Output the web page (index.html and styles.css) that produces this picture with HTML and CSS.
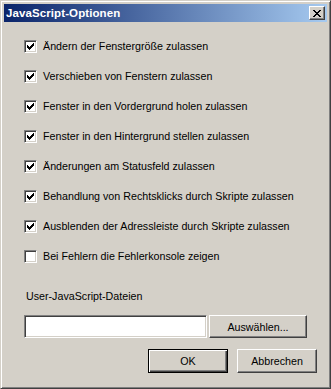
FILE: index.html
```html
<!DOCTYPE html>
<html lang="de">
  <head>
    <meta charset="UTF-8" />
    <title>JavaScript-Optionen</title>
    <link rel="stylesheet" href="styles.css">
  </head>
  <body>
    <div class="window">
      <header class="titlebar">
        <span class="title">JavaScript-Optionen</span>
        <button class="close" type="button" aria-label="Schließen">
          <svg width="8" height="7" viewBox="0 0 8 7" shape-rendering="crispEdges">
            <path d="M0 0h2v1h-2zM6 0h2v1h-2zM1 1h2v1h-2zM5 1h2v1h-2zM2 2h4v1h-4zM3 3h2v1h-2zM2 4h4v1h-4zM1 5h2v1h-2zM5 5h2v1h-2zM0 6h2v1h-2zM6 6h2v1h-2z" fill="#000"/>
          </svg>
        </button>
      </header>

      <main class="content">
        <ul class="options">
          <li class="option"><span class="box"><svg class="tick" width="11" height="11" viewBox="0 0 11 11" shape-rendering="crispEdges"><path d="M2 4h1v3h-1zM3 5h1v3h-1zM4 6h1v3h-1zM5 5h1v3h-1zM6 4h1v3h-1zM7 3h1v3h-1zM8 2h1v3h-1z" fill="#000"/></svg></span>Ändern der Fenstergröße zulassen</li>
          <li class="option"><span class="box"><svg class="tick" width="11" height="11" viewBox="0 0 11 11" shape-rendering="crispEdges"><path d="M2 4h1v3h-1zM3 5h1v3h-1zM4 6h1v3h-1zM5 5h1v3h-1zM6 4h1v3h-1zM7 3h1v3h-1zM8 2h1v3h-1z" fill="#000"/></svg></span>Verschieben von Fenstern zulassen</li>
          <li class="option"><span class="box"><svg class="tick" width="11" height="11" viewBox="0 0 11 11" shape-rendering="crispEdges"><path d="M2 4h1v3h-1zM3 5h1v3h-1zM4 6h1v3h-1zM5 5h1v3h-1zM6 4h1v3h-1zM7 3h1v3h-1zM8 2h1v3h-1z" fill="#000"/></svg></span>Fenster in den Vordergrund holen zulassen</li>
          <li class="option"><span class="box"><svg class="tick" width="11" height="11" viewBox="0 0 11 11" shape-rendering="crispEdges"><path d="M2 4h1v3h-1zM3 5h1v3h-1zM4 6h1v3h-1zM5 5h1v3h-1zM6 4h1v3h-1zM7 3h1v3h-1zM8 2h1v3h-1z" fill="#000"/></svg></span>Fenster in den Hintergrund stellen zulassen</li>
          <li class="option"><span class="box"><svg class="tick" width="11" height="11" viewBox="0 0 11 11" shape-rendering="crispEdges"><path d="M2 4h1v3h-1zM3 5h1v3h-1zM4 6h1v3h-1zM5 5h1v3h-1zM6 4h1v3h-1zM7 3h1v3h-1zM8 2h1v3h-1z" fill="#000"/></svg></span>Änderungen am Statusfeld zulassen</li>
          <li class="option"><span class="box"><svg class="tick" width="11" height="11" viewBox="0 0 11 11" shape-rendering="crispEdges"><path d="M2 4h1v3h-1zM3 5h1v3h-1zM4 6h1v3h-1zM5 5h1v3h-1zM6 4h1v3h-1zM7 3h1v3h-1zM8 2h1v3h-1z" fill="#000"/></svg></span>Behandlung von Rechtsklicks durch Skripte zulassen</li>
          <li class="option"><span class="box"><svg class="tick" width="11" height="11" viewBox="0 0 11 11" shape-rendering="crispEdges"><path d="M2 4h1v3h-1zM3 5h1v3h-1zM4 6h1v3h-1zM5 5h1v3h-1zM6 4h1v3h-1zM7 3h1v3h-1zM8 2h1v3h-1z" fill="#000"/></svg></span>Ausblenden der Adressleiste durch Skripte zulassen</li>
          <li class="option"><span class="box"></span>Bei Fehlern die Fehlerkonsole zeigen</li>
        </ul>

        <div class="files-label">User-JavaScript-Dateien</div>
        <div class="file-row">
          <div class="textfield"></div>
          <button class="btn browse" type="button">Auswählen...</button>
        </div>

        <div class="actions">
          <button class="btn default" type="button">OK</button>
          <button class="btn" type="button">Abbrechen</button>
        </div>
      </main>
    </div>
  </body>
</html>
```

FILE: styles.css
```css
html,
body {
  margin: 0;
  padding: 0;
  background: #d4d0c8;
}

body {
  font-family: "Liberation Sans", Arial, sans-serif;
  font-size: 10.7px;
  color: #000;
}

.window {
  box-sizing: border-box;
  width: 331px;
  height: 389px;
  border: 1px solid;
  border-color: #d4d0c8 #404040 #404040 #d4d0c8;
  box-shadow: inset 1px 1px #fff, inset -1px -1px #808080;
  padding: 3px;
  background: #d4d0c8;
}

/* title bar */
.titlebar {
  height: 18px;
  display: flex;
  align-items: center;
  justify-content: space-between;
  padding: 0 2px 0 2px;
  background: linear-gradient(to right, #0a246a, #a6caf0);
}

.title {
  color: #fff;
  font-weight: bold;
  font-size: 11.5px;
  letter-spacing: 0.1px;
}

.close {
  box-sizing: border-box;
  width: 16px;
  height: 14px;
  padding: 0;
  display: flex;
  align-items: center;
  justify-content: center;
  background: #d4d0c8;
  border: 1px solid;
  border-color: #fff #404040 #404040 #fff;
  box-shadow: inset -1px -1px #808080;
}

.close svg {
  display: block;
  margin: 0 1px 0 0;
}

/* body of the dialog */
.content {
  padding: 18px 10px 0 20px;
}

.options {
  list-style: none;
  margin: 0;
  padding: 0;
  display: flex;
  flex-direction: column;
  gap: 17px;
}

.option {
  display: flex;
  align-items: center;
  height: 13px;
  line-height: 13px;
  white-space: nowrap;
}

.box {
  box-sizing: border-box;
  flex: none;
  width: 13px;
  height: 13px;
  margin-right: 6px;
  background: #fff;
  border: 1px solid;
  border-color: #808080 #fff #fff #808080;
  box-shadow: inset 1px 1px #404040, inset -1px -1px #d4d0c8;
}

.tick {
  display: block;
}

.files-label {
  margin-top: 27px;
  padding-left: 2px;
  line-height: 13px;
}

.file-row {
  display: flex;
  gap: 2px;
  margin-top: 12px;
}

.textfield {
  box-sizing: border-box;
  width: 183px;
  height: 23px;
  background: #fff;
  border: 1px solid;
  border-color: #808080 #fff #fff #808080;
  box-shadow: inset 1px 1px #404040, inset -1px -1px #d4d0c8;
}

.btn {
  box-sizing: border-box;
  height: 23px;
  width: 98px;
  padding: 0;
  font-family: inherit;
  font-size: 10.7px;
  color: #000;
  background: #d4d0c8;
  border: 1px solid;
  border-color: #fff #404040 #404040 #fff;
  box-shadow: inset -1px -1px #808080;
}

.actions {
  display: flex;
  justify-content: flex-end;
  gap: 9px;
  margin-top: 11px;
}

.actions .btn {
  width: 80px;
  height: 24px;
}

.btn.default {
  border-color: #000;
  box-shadow: inset 1px 1px #fff, inset -1px -1px #404040, inset -2px -2px #808080;
}
```
